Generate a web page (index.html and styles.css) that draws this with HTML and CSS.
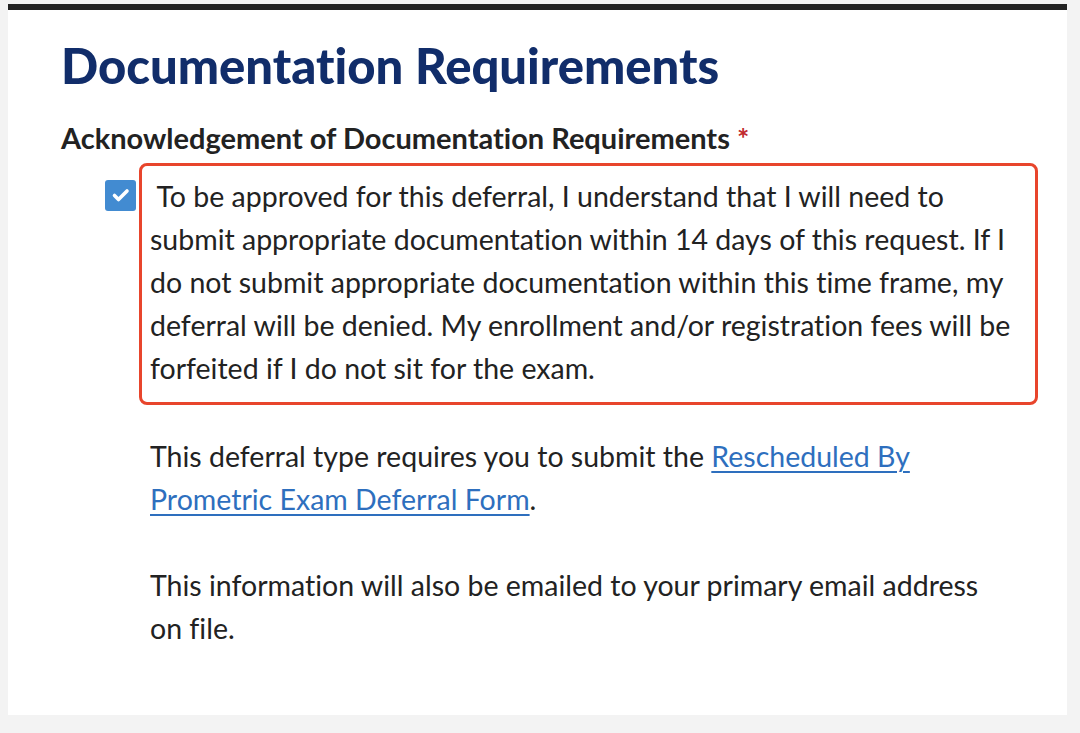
FILE: index.html
```html
<!DOCTYPE html>
<html>
<head>
<meta charset="utf-8">
<link rel="stylesheet" href="styles.css">
</head>
<body>
<div class="card">
  <h1 class="title">Documentation Requirements</h1>
  <div class="label">Acknowledgement of Documentation Requirements <span class="req">*</span></div>
  <div class="check-row">
    <span class="checkbox">
      <svg width="31" height="31" viewBox="0 0 31 31"><path d="M9.5 15.5 L13.5 19.5 L22 11" fill="none" stroke="#fff" stroke-width="3.6" stroke-linecap="round" stroke-linejoin="round"/></svg>
    </span>
    <div class="ack">&nbsp;To be approved for this deferral, I understand that I will need to submit appropriate documentation within 14 days of this request. If I do not submit appropriate documentation within this time frame, my deferral will be denied. My enrollment and/or registration fees will be forfeited if I do not sit for the exam.</div>
  </div>
  <div class="info">
    <p>This deferral type requires you to submit the <a href="#">Rescheduled By Prometric Exam Deferral Form</a>.</p>
    <p>This information will also be emailed to your primary email address on file.</p>
  </div>
</div>
</body>
</html>
```
FILE: styles.css
```css
html, body {
  margin: 0;
  padding: 0;
  background: #f3f3f3;
}
body {
  padding: 4px 13px 18px 8px;
  font-family: Lato, "Open Sans", sans-serif;
  font-variant-ligatures: none;
  color: #222;
}
.card {
  background: #fff;
  border-top: 6px solid #222;
  height: 711px;
  box-sizing: border-box;
  padding: 25px 20px 0 53px;
}
.title {
  margin: 0;
  font-size: 49px;
  font-weight: 900;
  color: #112d6a;
  line-height: 60px;
}
.label {
  margin-top: 26px;
  font-size: 29px;
  font-weight: 700;
  line-height: 34px;
  color: #222;
}
.req {
  color: #c0282d;
}
.check-row {
  display: flex;
  align-items: flex-start;
  margin-top: 8px;
  margin-left: 44px;
}
.checkbox {
  flex: none;
  width: 31px;
  height: 31px;
  border-radius: 3px;
  background: #428bd1;
  display: flex;
  align-items: center;
  justify-content: center;
  margin-top: 17px;
  margin-right: 3px;
}
.ack {
  flex: none;
  border: 3px solid #e8452c;
  border-radius: 8px;
  padding: 9px 13px 12px 8px;
  width: 899px;
  box-sizing: border-box;
  font-size: 28.5px;
  line-height: 43px;
}
.info {
  margin-left: 89px;
  margin-top: 30px;
  width: 860px;
  font-size: 28.5px;
  line-height: 43px;
}
.info p {
  margin: 0 0 43px 0;
}
.info a {
  color: #2e6fbe;
  text-decoration: underline;
  text-decoration-thickness: 2px;
  text-underline-offset: 4px;
}
```
